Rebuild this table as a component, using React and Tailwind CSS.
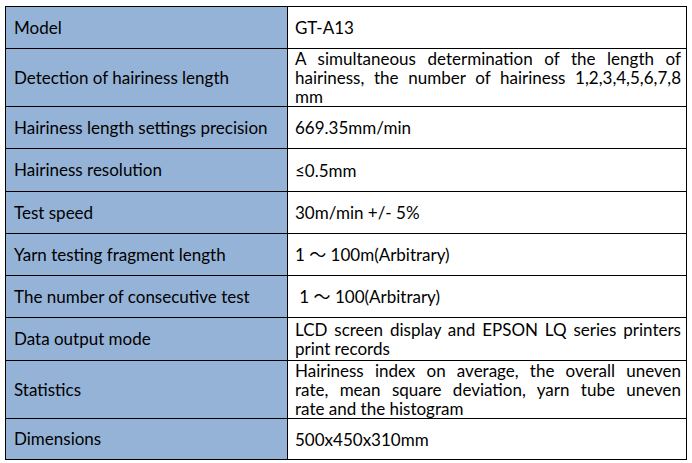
import React from 'react';

const rows = [
    { label: 'Model', h: 42, value: ['GT-A13'] },
    {
        label: 'Detection of hairiness length',
        h: 57,
        value: [
            'A simultaneous determination of the length of',
            'hairiness, the number of hairiness 1,2,3,4,5,6,7,8',
            'mm',
        ],
    },
    { label: 'Hairiness length settings precision', h: 42, value: ['669.35mm/min'] },
    { label: 'Hairiness resolution', h: 43, value: ['≤0.5mm'] },
    { label: 'Test speed', h: 42, value: ['30m/min +/- 5%'] },
    { label: 'Yarn testing fragment length', h: 42, value: ['1 ～ 100m(Arbitrary)'] },
    { label: 'The number of consecutive test', h: 42, value: ['\u00a01 ～ 100(Arbitrary)'] },
    {
        label: 'Data output mode',
        h: 43,
        value: ['LCD screen display and EPSON LQ series printers', 'print records'],
    },
    {
        label: 'Statistics',
        h: 57,
        value: [
            'Hairiness index on average, the overall uneven',
            'rate, mean square deviation, yarn tube uneven',
            'rate and the histogram',
        ],
    },
    { label: 'Dimensions', h: 41, value: ['500x450x310mm'] },
];

const SpecRow = ({ row }) => (
    <tr style={{ height: row.h }}>
        <td className="border border-black bg-[#95b3d7] pl-[8px] align-middle">{row.label}</td>
        <td className="border border-black bg-white pl-[7px] pr-[5px] align-middle">
            {row.value.map((line, i) => (
                <div
                    key={i}
                    className={
                        i < row.value.length - 1
                            ? 'whitespace-nowrap text-justify [text-align-last:justify] leading-[19px]'
                            : 'whitespace-nowrap leading-[19px]'
                    }
                >
                    {line}
                </div>
            ))}
        </td>
    </tr>
);

export default function App() {
    return (
        <div className="w-[692px] h-[463px] bg-white pt-[6px] pl-[5px]">
            <table
                className="table-fixed border-collapse text-[17px] text-black"
                style={{ fontFamily: 'Lato, "Noto Sans CJK SC", sans-serif' }}
            >
                <colgroup>
                    <col className="w-[282px]" />
                    <col className="w-[399px]" />
                </colgroup>
                <tbody>
                    {rows.map((row) => (
                        <SpecRow key={row.label} row={row} />
                    ))}
                </tbody>
            </table>
        </div>
    );
}
